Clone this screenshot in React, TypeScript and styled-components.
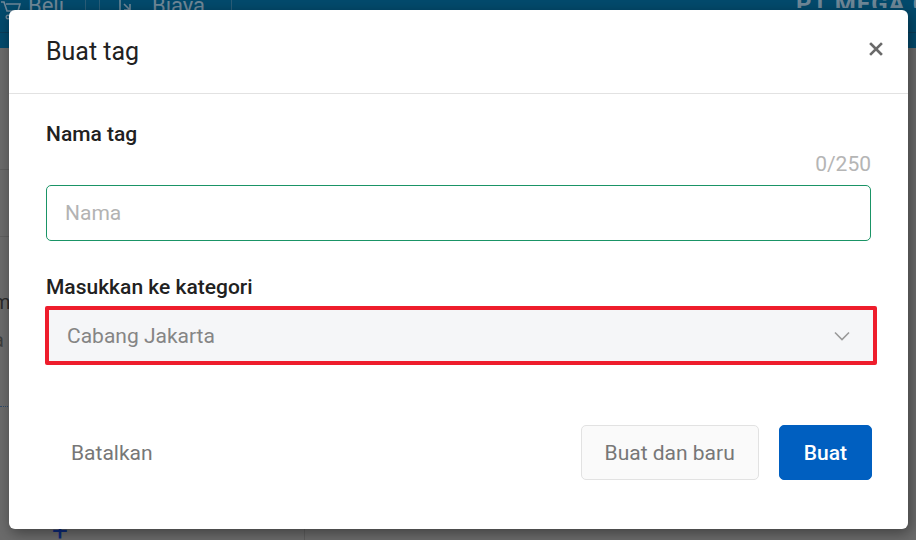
import React from 'react'
import styled, { createGlobalStyle } from 'styled-components'

const GlobalStyle = createGlobalStyle`
  html, body {
    margin: 0;
    padding: 0;
    width: 916px;
    height: 540px;
    overflow: hidden;
    font-family: Roboto, "Noto Sans", "Liberation Sans", sans-serif;
  }
  * { box-sizing: border-box; }
`

const Page = styled.div`
  position: relative;
  width: 916px;
  height: 540px;
  background: #6b6b6b;
  overflow: hidden;
`

const TopBar = styled.div`
  height: 48px;
  background: #034a6c;
`

const TabRow = styled.div`
  height: 33px;
  display: flex;
  align-items: flex-start;
  border-bottom: 1px solid #0b3d58;
`

const Tab = styled.div<{ width: number }>`
  width: ${({ width }) => width}px;
  height: 33px;
  display: flex;
  align-items: flex-start;
  border-right: 1px solid #2a5d78;
  color: #6f8797;
  font-size: 22px;
  line-height: 12px;
  overflow: hidden;
  svg { flex-shrink: 0; }
`

const TabText = styled.span<{ offset: number }>`
  margin-left: ${({ offset }) => offset}px;
`

const Company = styled.div`
  margin-left: auto;
  width: 120px;
  overflow: hidden;
  color: #6f8797;
  font-weight: 700;
  font-size: 24px;
  line-height: 8px;
  letter-spacing: 1px;
  white-space: nowrap;
`

const Content = styled.div`
  display: flex;
  height: 492px;
`

const SideCol = styled.div`
  width: 305px;
  border-right: 1px solid #5e5e5e;
  display: flex;
  flex-direction: column;
`

const SideBlock = styled.div<{ h: number; dotted?: boolean }>`
  height: ${({ h }) => h}px;
  border-bottom: 1px ${({ dotted }) => (dotted ? 'dotted #2e4a6a' : 'solid #5f5f5f')};
  color: #2a2a2a;
  font-size: 20px;
  padding-top: 46px;
  line-height: 38px;
`

const CutText = styled.div<{ tone?: string }>`
  margin-left: -7px;
  color: ${({ tone }) => tone || '#2a2a2a'};
`

const Plus = styled.div`
  margin-top: auto;
  margin-left: 52px;
  color: #0c2a7a;
  font-size: 28px;
  line-height: 18px;
`

const Backdrop = styled.div`
  position: absolute;
  inset: 0;
  display: flex;
  align-items: flex-start;
  padding: 10px 8px 0 9px;
`

const Modal = styled.div`
  width: 899px;
  height: 519px;
  background: #fff;
  border-radius: 6px;
  box-shadow: 2px 4px 14px rgba(0, 0, 0, 0.4);
  display: flex;
  flex-direction: column;
  color: #212121;
`

const Header = styled.div`
  height: 84px;
  flex-shrink: 0;
  padding: 0 24px 0 37px;
  display: flex;
  align-items: center;
  justify-content: space-between;
  border-bottom: 1px solid #e2e2e2;
`

const Title = styled.h2`
  margin: 0;
  font-size: 25px;
  font-weight: 400;
  line-height: 30px;
  color: #212121;
`

const CloseButton = styled.button`
  border: none;
  background: none;
  padding: 0;
  width: 16px;
  height: 16px;
  margin-top: -6px;
  display: flex;
  align-items: center;
  justify-content: center;
  cursor: pointer;
`

const Body = styled.div`
  padding: 28px 37px 0;
  display: flex;
  flex-direction: column;
`

const Label = styled.label`
  font-size: 21px;
  font-weight: 500;
  color: #212121;
  line-height: 24px;
`

const Counter = styled.div`
  align-self: flex-end;
  margin-top: 6px;
  margin-bottom: 9px;
  font-size: 21px;
  color: #b5b5b5;
  line-height: 24px;
`

const TextInput = styled.input`
  height: 56px;
  width: 100%;
  border: 1px solid #1a9466;
  border-radius: 5px;
  padding: 0 18px;
  font-family: inherit;
  font-size: 21px;
  color: #212121;
  outline: none;
  &::placeholder { color: #b3b3b3; }
`

const Spacer = styled.div<{ h: number }>`
  height: ${({ h }) => h}px;
`

const Highlight = styled.div`
  margin: 7px -6px 0 -1px;
  border: 4px solid #ee1d2c;
  border-radius: 2px;
  height: 59px;
`

const Select = styled.div`
  height: 100%;
  background: #f5f6f8;
  display: flex;
  align-items: center;
  justify-content: space-between;
  padding: 0 23px 0 18px;
  font-size: 21px;
  color: #858585;
`

const Footer = styled.div`
  margin-top: auto;
  padding: 0 36px 49px 37px;
  display: flex;
  align-items: center;
  gap: 20px;
`

const GhostButton = styled.button`
  margin-right: auto;
  border: none;
  background: none;
  font-family: inherit;
  font-size: 21px;
  color: #777;
  padding: 0 25px;
  height: 55px;
  cursor: pointer;
`

const Button = styled.button<{ primary?: boolean }>`
  height: 55px;
  padding: 0 ${({ primary }) => (primary ? 24 : 23)}px;
  border-radius: 5px;
  font-family: inherit;
  font-size: 21px;
  cursor: pointer;
  border: 1px solid ${({ primary }) => (primary ? '#005fc0' : '#e2e2e2')};
  background: ${({ primary }) => (primary ? '#005fc0' : '#fafafa')};
  color: ${({ primary }) => (primary ? '#fff' : '#777')};
  font-weight: ${({ primary }) => (primary ? 500 : 400)};
`

function CartIcon() {
  return (
    <svg width="22" height="22" viewBox="0 0 22 22">
      <path d="M1 2h3l3 9h11l2-7H6" fill="none" stroke="#6f8797" strokeWidth="1.6" />
      <circle cx="8" cy="17" r="1.8" fill="none" stroke="#6f8797" strokeWidth="1.4" />
      <circle cx="17" cy="17" r="1.8" fill="none" stroke="#6f8797" strokeWidth="1.4" />
    </svg>
  )
}

function ReceiptIcon() {
  return (
    <svg width="20" height="20" viewBox="0 0 20 20">
      <path d="M2 0v18M6 4l6 6M6 10h6V4" fill="none" stroke="#6f8797" strokeWidth="1.6" />
    </svg>
  )
}

export default function App() {
  return (
    <>
      <GlobalStyle />
      <Page>
        <TopBar>
          <TabRow>
            <Tab width={86}>
              <CartIcon />
              <TabText offset={6}>Beli</TabText>
            </Tab>
            <Tab width={14} />
            <Tab width={132}>
              <TabText offset={18}><ReceiptIcon /></TabText>
              <TabText offset={14}>Biaya</TabText>
            </Tab>
            <Company>PT MEGA CAHAYA</Company>
          </TabRow>
        </TopBar>
        <Content>
          <SideCol>
            <SideBlock h={122} />
            <SideBlock h={67} />
            <SideBlock h={170} dotted>
              <CutText>m</CutText>
              <CutText tone="#3e3e3e">a</CutText>
            </SideBlock>
            <Plus>+</Plus>
          </SideCol>
        </Content>

        <Backdrop>
          <Modal role="dialog" aria-label="Buat tag">
            <Header>
              <Title>Buat tag</Title>
              <CloseButton aria-label="Tutup">
                <svg width="14" height="14" viewBox="0 0 14 14">
                  <path d="M2 2l10 10M12 2L2 12" stroke="#6a6a6a" strokeWidth="2.6" strokeLinecap="square" />
                </svg>
              </CloseButton>
            </Header>
            <Body>
              <Label>Nama tag</Label>
              <Counter>0/250</Counter>
              <TextInput placeholder="Nama" />
              <Spacer h={34} />
              <Label>Masukkan ke kategori</Label>
              <Highlight>
                <Select>
                  <span>Cabang Jakarta</span>
                  <svg width="16" height="10" viewBox="0 0 16 10">
                    <path d="M1 1.5l7 7 7-7" fill="none" stroke="#9a9a9a" strokeWidth="1.6" />
                  </svg>
                </Select>
              </Highlight>
            </Body>
            <Footer>
              <GhostButton>Batalkan</GhostButton>
              <Button>Buat dan baru</Button>
              <Button primary>Buat</Button>
            </Footer>
          </Modal>
        </Backdrop>
      </Page>
    </>
  )
}
